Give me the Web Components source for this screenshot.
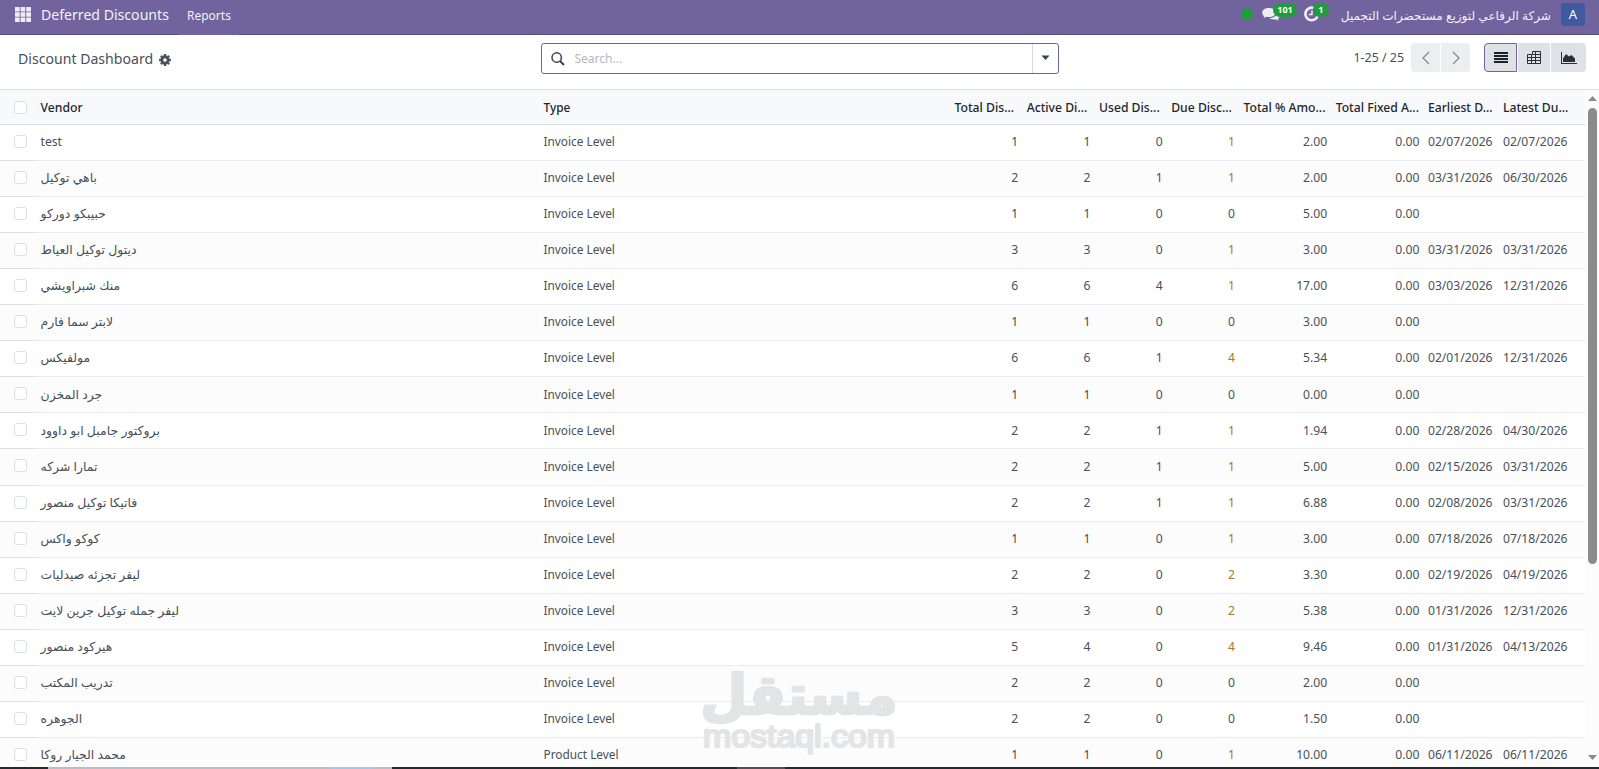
<!DOCTYPE html>
<html lang="en">
<head>
<meta charset="utf-8">
<title>Discount Dashboard</title>
<style>
html, body {
  margin: 0;
  height: 100%;
  overflow: hidden;
  background: #fff;
}
</style>
</head>
<body>
<discount-app></discount-app>

<script>
const define = (name, html, setup) => {
  const template = document.createElement('template');
  template.innerHTML = html;
  customElements.define(name, class extends HTMLElement {
    constructor() {
      super();
      this.attachShadow({ mode: 'open' });
      this.shadowRoot.appendChild(template.content.cloneNode(true));
    }

    connectedCallback() {
      if (setup) setup(this, this.shadowRoot);
    }
  });
};

// icon with a counter on its corner
define('systray-item', `
<style>
:host {
  display: block;
  position: relative;
  height: 34px;
}
::slotted(svg) { display: block; }
span {
  position: absolute;
  left: var(--badge-left, 11px);
  top: 3px;
  height: 14px;
  min-width: 7px;
  padding: 0 4.5px;
  border-radius: 7px;
  background: #219c3d;
  color: #fff;
  font: 700 9px/14px "Noto Sans", sans-serif;
  text-align: center;
}
</style>
<slot></slot><span></span>
`, (el, root) => {
  root.querySelector('span').textContent = el.getAttribute('count');
});

define('nav-bar', `
<style>
:host {
  display: flex;
  box-sizing: border-box;
  height: 35px;
  border-bottom: 1px solid #5a4f7f;
  background: #71639e;
  color: #f3f1f7;
}
.apps { margin: 7px 0 0 15px; }
.brand { margin-left: 10px; font-size: 14.1px; line-height: 29px; width: 137px; white-space: nowrap; }
.menu { height: 35px; width: 61px; box-sizing: border-box; padding-left: 9px; background: #71639e; font-size: 12px; line-height: 31px; }
.tray { display: flex; margin-left: auto; }
.dot { flex: none; width: 12px; height: 12px; margin: 8px 9px 0 0; border-radius: 50%; background: #219c3d; }
.company { font-size: 12.1px; line-height: 31px; white-space: nowrap; }
.avatar { width: 24px; height: 23px; margin: 3px 14px 0 10px; border-radius: 3px; background: #3f5aa0; color: #fff; font-size: 13px; line-height: 23px; text-align: center; }
</style>
<svg class="apps" width="16" height="15" viewBox="0 0 16 15" fill="#eeecf4">
  <path d="M0 0h4.7v4.4H0zM5.6 0h4.7v4.4H5.6zM11.2 0H16v4.4h-4.8zM0 5.3h4.7v4.4H0zM5.6 5.3h4.7v4.4H5.6zM11.2 5.3H16v4.4h-4.8zM0 10.6h4.7V15H0zM5.6 10.6h4.7V15H5.6zM11.2 10.6H16V15h-4.8z"/>
</svg>
<div class="brand">Deferred Discounts</div>
<div class="menu">Reports</div>
<div class="tray">
  <div class="dot"></div>
  <systray-item count="101" style="width:42px"></systray-item>
  <systray-item count="1" style="width:37px;--badge-left:9px"></systray-item>
  <div class="company" dir="rtl">شركة الرفاعي لتوزيع مستحضرات التجميل</div>
  <div class="avatar">A</div>
</div>
`, (el, root) => {
  const [chat, clock] = root.querySelectorAll('systray-item');
  chat.innerHTML = `<svg width="18" height="24" viewBox="0 0 18 24" fill="#f0eef5">
    <path d="M7 8C3 8 .2 10.1 .2 12.7c0 1.4.8 2.7 2.1 3.5-.2.7-.6 1.2-1.2 1.8 1.2 0 2.2-.5 3.1-1.2.9.2 1.8.3 2.8.3 3.9 0 6.8-2 6.8-4.500S10.900 8 7 8z"/>
    <path d="M15.2 12c.2 3.500-3.500 6-7.700 6.200 1.100.9 2.700 1.400 4.500 1.400.7 0 1.300-.1 1.900-.2.9.7 1.900 1.100 3 1.200-.5-.5-.9-1-1.100-1.700 2.600-1.600 2.800-5.100-.6-6.900z"/>
  </svg>`;
  clock.innerHTML = `<svg width="16" height="24" viewBox="0 0 16 24" fill="none" stroke="#f0eef5">
    <path d="M13.6 16.2A6.300 6.300 0 1 1 9.500 7.900" stroke-width="2.600"/>
    <path d="M8 10.500v4H4.800" stroke-width="1.500"/>
  </svg>`;
});

define('search-box', `
<style>
:host {
  display: flex;
  box-sizing: border-box;
  width: 518px;
  height: 31px;
  border: 1px solid #71639e;
  border-radius: 3px;
  background: #fff;
}
svg { display: block; }
.lens { margin: 8px 0 0 9px; }
.hint { flex: 1; margin-left: 9.5px; color: #b4b8bd; font-size: 12px; line-height: 29px; }
.toggle { width: 25px; border-left: 1px solid #d8dadd; }
.toggle svg { margin: 11px 0 0 8px; }
</style>
<svg class="lens" width="14" height="14" viewBox="0 0 14 14" fill="none" stroke="#374151" stroke-width="1.500">
  <circle cx="5.700" cy="5.500" r="4.700"/><path d="M9 9l4 4" stroke-width="1.900"/>
</svg>
<div class="hint">Search...</div>
<div class="toggle"><svg width="9" height="6"><path d="M.5 .5h8L4.500 5z" fill="#374151"/></svg></div>
`);

define('icon-button', `
<style>
:host {
  display: flex;
  box-sizing: border-box;
  align-items: center;
  justify-content: center;
  height: 29px;
  background: #dee1e6;
}
:host([muted]) { background: #edeef1; }
:host([active]) { border: 1px solid #71639e; }
::slotted(svg) { display: block; }
</style>
<slot></slot>
`);

define('control-panel', `
<style>
:host {
  display: grid;
  grid-template-columns: 541px 518px 1fr;
  box-sizing: border-box;
  height: 54px;
  padding-top: 8px;
}
.title { display: flex; padding-left: 18px; color: #4b5058; font-size: 14.1px; line-height: 31px; white-space: nowrap; }
.title svg { margin: 11px 0 0 6px; }
.right { display: flex; justify-content: flex-end; padding-right: 13px; }
.pager { margin-right: 7px; color: #4b5058; font-size: 12.4px; line-height: 29px; }
.group { display: flex; gap: 1px; }
</style>
<div class="title"><span>Discount Dashboard</span>
  <svg width="12" height="12" viewBox="-6 -6 12 12">
    <circle r="3.100" fill="none" stroke="#495057" stroke-width="2.700"/>
    <path d="M0-5.900V-4M0 5.900V4M-5.900 0H-4M5.900 0H4M-4.100-4.100l1.200 1.200M4.100 4.100L2.900 2.900M-4.100 4.100l1.200-1.200M4.100-4.100L2.900-2.900" stroke="#495057" stroke-width="2.500"/>
  </svg>
</div>
<search-box></search-box>
<div class="right">
  <div class="pager">1-25 / 25</div>
  <div class="group">
    <icon-button muted style="width:29px;border-radius:4px 0 0 4px"><svg width="8" height="14" fill="none" stroke="#868a90" stroke-width="1.300"><path d="M7 1L1 7l6 6"/></svg></icon-button>
    <icon-button muted style="width:29px;border-radius:0 4px 4px 0"><svg width="8" height="14" fill="none" stroke="#868a90" stroke-width="1.300"><path d="M1 1l6 6-6 6"/></svg></icon-button>
  </div>
  <div class="group" style="margin-left:14px">
    <icon-button active style="width:33px;border-radius:4px 0 0 4px"><svg width="14" height="11" fill="#1b2128"><path d="M0 0h14v2H0zM0 3h14v2H0zM0 6h14v2H0zM0 9h14v2H0z"/></svg></icon-button>
    <icon-button style="width:32px"><svg width="14" height="13" fill="none" stroke="#2a3038"><path d="M4.500 3.500H.5v9h13V.5h-8v3M.5 6.500h13M.5 9.500h13M4.500 3.500v9M8.500.5v12M4.500 3.500h9"/></svg></icon-button>
    <icon-button style="width:35px;border-radius:0 4px 4px 0"><svg width="16" height="12" fill="#2a3038"><path d="M0 0h1v11h15v1H0zM2 10V6.500l3-4.500 3 2.500L10.500 3 14 6.500V10z"/></svg></icon-button>
  </div>
</div>
`);

define('check-box', `
<style>
:host {
  display: block;
  box-sizing: border-box;
  width: 13px;
  height: 13px;
  border: 1px solid #dcdfe3;
  border-radius: 3px;
  background: #fff;
}
</style>
`);

define('list-row', `
<style>
:host {
  display: grid;
  grid-template-columns: 36px 502.5px 411.5px 72.2px 72.3px 72.200px 72.300px 92.200px 92.300px 75px 1fr;
  box-sizing: border-box;
  height: 36px;
  flex: none;
  color: #495057;
  font-size: 12.15px;
  line-height: 33px;
}
:host([even]) { background: #fcfcfc; }
:host([low]) { line-height: 35px; }
:host([tall]) { height: 37px; }
div { box-sizing: border-box; padding: 0 4.5px; border-bottom: 1px solid #e9ebee; white-space: nowrap; }
.pick { padding: 10px 0 0 14px; border-color: #dcdfe4; }
.type { padding-left: 5px; font-size: 11.85px; }
.num { padding-right: 4px; text-align: right; }
.warn { color: #a8782f; }
bdi { font-size: 12.45px; }
:host([head]) {
  height: 35px;
  background: #f8f9fa;
  color: #1f262d;
  font-size: 12.2px;
  font-weight: 500;
}
:host([head]) div { padding-top: 1px; text-align: left; border-color: #dcdfe4; }
:host([head]) .pick { padding-top: 11px; }
</style>
<div class="pick"><check-box></check-box></div>
`, (el, root) => {
  el.cells.forEach((text, i) => {
    const cell = document.createElement('div');
    const isArabic = /[\u0600-\u06ff]/.test(text);
    const inner = document.createElement(isArabic ? 'bdi' : 'span');
    inner.textContent = text;
    cell.appendChild(inner);
    if (i === 1) cell.classList.add('type');
    if (i > 1 && i < 8) cell.classList.add('num');
    if (i === 5 && Number(text) > 0) cell.classList.add('warn');
    root.appendChild(cell);
  });
});

const columns = ['Vendor', 'Type', 'Total Dis...', 'Active Di...', 'Used Dis...', 'Due Disc...', 'Total % Amo...', 'Total Fixed A...', 'Earliest D...', 'Latest Du...'];

const I = 'Invoice Level';
const records = [
  ['test', I, 1, 1, 0, 1, '2.00', '0.00', '02/07/2026', '02/07/2026'],
  ['باهي توكيل', I, 2, 2, 1, 1, '2.00', '0.00', '03/31/2026', '06/30/2026'],
  ['حبيبكو دوركو', I, 1, 1, 0, 0, '5.00', '0.00', '', ''],
  ['ديتول توكيل العياط', I, 3, 3, 0, 1, '3.00', '0.00', '03/31/2026', '03/31/2026'],
  ['منك شبراويشي', I, 6, 6, 4, 1, '17.00', '0.00', '03/03/2026', '12/31/2026'],
  ['لابتر سما فارم', I, 1, 1, 0, 0, '3.00', '0.00', '', ''],
  ['مولفيكس', I, 6, 6, 1, 4, '5.34', '0.00', '02/01/2026', '12/31/2026'],
  ['جرد المخزن', I, 1, 1, 0, 0, '0.00', '0.00', '', ''],
  ['بروكتور جامبل ابو داوود', I, 2, 2, 1, 1, '1.94', '0.00', '02/28/2026', '04/30/2026'],
  ['تمارا شركه', I, 2, 2, 1, 1, '5.00', '0.00', '02/15/2026', '03/31/2026'],
  ['فاتيكا توكيل منصور', I, 2, 2, 1, 1, '6.88', '0.00', '02/08/2026', '03/31/2026'],
  ['كوكو واكس', I, 1, 1, 0, 1, '3.00', '0.00', '07/18/2026', '07/18/2026'],
  ['ليفر تجزئه صيدليات', I, 2, 2, 0, 2, '3.30', '0.00', '02/19/2026', '04/19/2026'],
  ['ليفر جمله توكيل جرين لايت', I, 3, 3, 0, 2, '5.38', '0.00', '01/31/2026', '12/31/2026'],
  ['هيركود منصور', I, 5, 4, 0, 4, '9.46', '0.00', '01/31/2026', '04/13/2026'],
  ['تدريب المكتب', I, 2, 2, 0, 0, '2.00', '0.00', '', ''],
  ['الجوهره', I, 2, 2, 0, 0, '1.50', '0.00', '', ''],
  ['محمد الجيار روكا', 'Product Level', 1, 1, 0, 1, '10.00', '0.00', '06/11/2026', '06/11/2026'],
];

define('scroll-bar', `
<style>
:host {
  display: flex;
  flex-direction: column;
  align-items: center;
  width: 14px;
  background: #fcfcfc;
}
svg { display: block; flex: none; }
.up { margin: 6px 0 7px; }
.thumb { width: 9px; height: 456px; border-radius: 5px; background: #8b8b8b; }
.down { margin-top: auto; margin-bottom: 7px; }
</style>
<svg class="up" width="9" height="5"><path d="M0 5h9L4.500 0z" fill="#8b8b8b"/></svg>
<div class="thumb"></div>
<svg class="down" width="9" height="5"><path d="M0 0h9L4.500 5z" fill="#8b8b8b"/></svg>
`);

define('list-view', `
<style>
:host {
  display: flex;
  min-height: 0;
  border-top: 1px solid #dcdfe4;
}
.table { display: flex; flex-direction: column; width: 1585px; overflow: hidden; }
</style>
<div class="table"></div>
<scroll-bar></scroll-bar>
`, (el, root) => {
  const table = root.querySelector('.table');
  [columns, ...records].forEach((cells, i) => {
    const row = document.createElement('list-row');
    row.cells = cells.map(String);
    if (i === 0) row.setAttribute('head', '');
    else if (i % 2 === 0) row.setAttribute('even', '');
    if (i >= 8 && i <= 10) row.setAttribute('low', '');
    if (i === 10) row.setAttribute('tall', '');
    table.appendChild(row);
  });
});

define('site-watermark', `
<style>
:host {
  position: absolute;
  left: 696px;
  top: 660px;
}
svg { display: block; overflow: visible; }
text { fill: #e3e4e6; stroke: #e3e4e6; stroke-linejoin: round; }
.arabic { font-family: "DejaVu Sans", sans-serif; font-weight: 700; }
.latin { font-family: "Liberation Sans", sans-serif; }
</style>
<svg width="210" height="100">
  <text class="arabic" transform="translate(103 54) scale(1.08 1.1)" font-size="50" stroke-width="2.500" text-anchor="middle" direction="rtl">مستقل</text>
  <text class="latin" x="7" y="87" font-size="31" stroke-width="2.200" textLength="192" lengthAdjust="spacingAndGlyphs">mostaql.com</text>
</svg>
`);

// sliver of the desktop taskbar below the page
define('task-strip', `
<style>
:host { display: flex; height: 2px; background: #232b32; }
i { display: block; height: 2px; }
</style>
<i style="width:48px"></i><i style="width:282px;background:#bcbcc4"></i><i style="width:44px;background:#a3c6ee"></i><i style="width:18px;background:#bcbcc4"></i><i style="width:345px"></i><i style="width:48px;background:#5b4b53"></i>
`);

define('discount-app', `
<style>
:host {
  display: flex;
  flex-direction: column;
  height: 769px;
  overflow: hidden;
  font-family: "Noto Sans", "DejaVu Sans", sans-serif;
}
list-view { flex: 1; }
</style>
<nav-bar></nav-bar>
<control-panel></control-panel>
<list-view></list-view>
<task-strip></task-strip>
<site-watermark></site-watermark>
`);
</script>
</body>
</html>
